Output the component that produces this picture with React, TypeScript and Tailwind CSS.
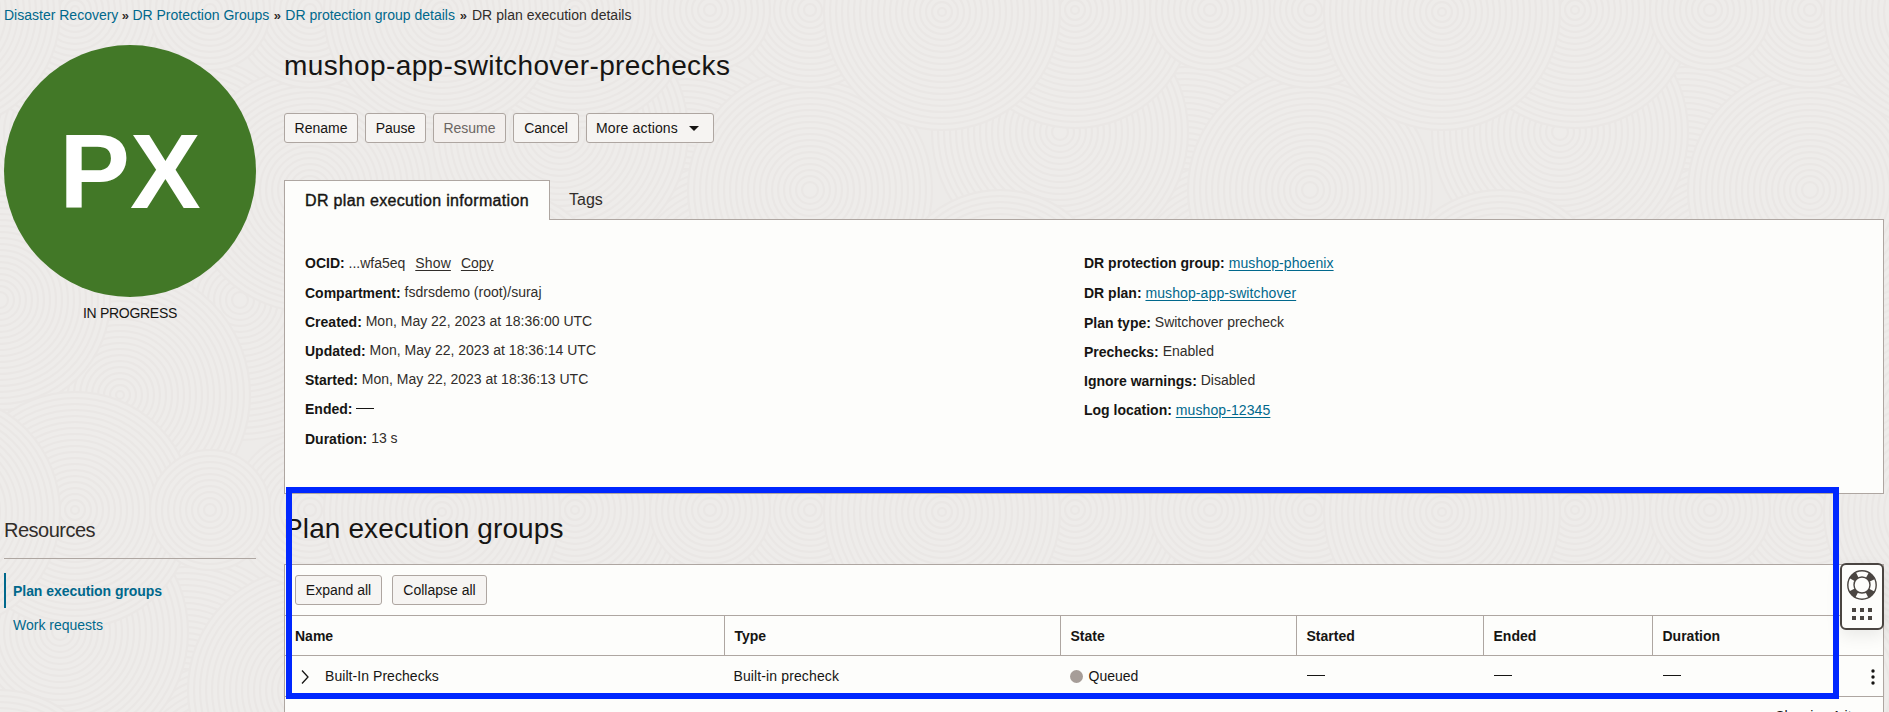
import type { ReactNode } from 'react';

const discs = [
  { x: 455, y: 185, r: 130 },
  { x: 10, y: 300, r: 140 },
  { x: 200, y: 420, r: 135 },
  { x: 390, y: 395, r: 130 },
  { x: 80, y: 190, r: 122 },
  { x: 330, y: 132, r: 128 },
  { x: 270, y: 300, r: 110 },
  { x: 80, y: 10, r: 78 },
  { x: 345, y: 10, r: 118 },
  { x: 212, y: 12, r: 118 },
  { x: 480, y: 10, r: 60 },
];

function Disc({ x, y, r }: { x: number; y: number; r: number }) {
  const rings: number[] = [];
  for (let k = r; k > 2; k -= 6) rings.push(k);
  return (
    <g fill="#eeecea" stroke="#eae7e5" strokeWidth="2">
      {rings.map((k) => (
        <circle key={k} cx={x} cy={y} r={k} />
      ))}
    </g>
  );
}

function Backdrop() {
  return (
    <svg className="absolute inset-0 -z-10 h-full w-full" aria-hidden="true">
      <defs>
        <pattern id="ripples" x="-103" y="8" width="500" height="500" patternUnits="userSpaceOnUse">
          <rect width="500" height="500" fill="#edebe9" />
          {discs.map((d, i) => (
            <g key={i}>
              {[-500, 0, 500].map((dx) =>
                [-500, 0, 500].map((dy) => <Disc key={`${dx}/${dy}`} x={d.x + dx + 333} y={d.y + dy - 8} r={d.r} />),
              )}
            </g>
          ))}
        </pattern>
      </defs>
      <rect width="100%" height="100%" fill="url(#ripples)" />
    </svg>
  );
}

function Button({ children, width, disabled }: { children: ReactNode; width: string; disabled?: boolean }) {
  return (
    <button
      disabled={disabled}
      className={`flex h-[30px] items-center justify-center rounded-[3px] border border-[#aea6a1] whitespace-nowrap ${width} ${
        disabled ? 'bg-[#f3efed] text-[#6b6663]' : 'bg-[#f6f4f2] text-[#161513]'
      }`}
    >
      {children}
    </button>
  );
}

function Field({ label, tall, children }: { label: string; tall?: boolean; children: ReactNode }) {
  return (
    <div className={`leading-5 whitespace-nowrap ${tall ? 'h-[30px]' : 'h-[29px]'}`}>
      <span className="font-bold text-[#161513]">{label}:</span> {children}
    </div>
  );
}

function Value({ children }: { children: ReactNode }) {
  return <span className="align-[1px] leading-none">{children}</span>;
}

function Link({ children }: { children: ReactNode }) {
  return (
    <a href="#" className="tracking-[0.1px] text-[#00688c] underline underline-offset-2">
      {children}
    </a>
  );
}

function Dash() {
  return <span className="inline-block h-px w-[18px] bg-[#161513] align-[5px]" />;
}

const columns = 'grid grid-cols-[438.5px_336px_236px_187px_169px_1fr]';

export default function App() {
  return (
    <div className="relative isolate h-[712px] w-full overflow-hidden bg-[#edebe9] pt-[5px] pl-1 font-['Liberation_Sans',Arial,sans-serif] text-sm leading-5 text-[#312d2a]">
      <Backdrop />
      <nav className="flex h-5 whitespace-pre">
        <a href="#" className="text-[#00688c]">Disaster Recovery</a>
        <b className="w-3.5 pt-px text-center text-[13px]">»</b>
        <a href="#" className="text-[#00688c]">DR Protection Groups</a>
        <b className="w-4 pt-px text-center text-[13px]">»</b>
        <a href="#" className="text-[#00688c]">DR protection group details</a>
        <b className="w-[17px] pt-px text-center text-[13px]">»</b>
        <span className="tracking-[0.03px]">DR plan execution details</span>
      </nav>

      <div className="flex gap-7">
        <aside className="w-[252px] shrink-0 pt-5">
          <div className="flex size-[252px] items-center justify-center rounded-full bg-[#427827] text-[106px] leading-none font-bold text-white">
            <span>PX</span>
          </div>
          <p className="mt-1.5 text-center tracking-[-0.3px] text-[#161513]">IN PROGRESS</p>
          <h2 className="mt-[195px] h-10 text-xl leading-6 tracking-[-0.5px] text-[#312d2a]">Resources</h2>
          <ul className="border-t border-[#aea6a1] pt-3.5">
            <li className="flex h-[35px] items-center border-l-2 border-[#00688c] pl-[7px] font-bold tracking-[-0.05px] text-[#00688c]">
              Plan execution groups
            </li>
            <li className="flex h-[33px] items-center pl-[9px] text-[#00688c]">Work requests</li>
          </ul>
        </aside>

        <main className="w-[1600px] shrink-0 pt-[25px]">
          <h1 className="text-[28px] leading-8 tracking-[0.39px] text-[#161513]">mushop-app-switchover-prechecks</h1>
          <div className="mt-[31px] flex gap-[7px]">
            <Button width="w-[74px]">Rename</Button>
            <Button width="w-[61px]">Pause</Button>
            <Button width="w-[73px]" disabled>Resume</Button>
            <Button width="w-[66px]">Cancel</Button>
            <Button width="w-[128px]">
              <span className="tracking-[0.15px]">More actions</span>
              <svg className="mr-[5px] ml-[11px] h-[5px] w-[10px]" viewBox="0 0 10 5">
                <path d="M0 0h10L5 5z" fill="#161513" />
              </svg>
            </Button>
          </div>

          <div className="mt-[37px] flex h-10 items-center text-base">
            <div className="z-10 flex h-10 w-[266px] items-center justify-center border border-b-0 border-[#aea6a1] bg-[#fdfdfb] tracking-[0.33px] text-[#161513] [-webkit-text-stroke:0.4px_#161513]">
              DR plan execution information
            </div>
            <div className="pl-[19px]">Tags</div>
          </div>
          <section className="-mt-px flex h-[275px] border border-[#aea6a1] bg-[#fdfdfb] px-5 pt-[33px]">
            <div className="w-[779px]">
              <Field label="OCID" tall>
                ...wfa5eq <a href="#" className="ml-1.5 tracking-[0.15px] underline underline-offset-2">Show</a>
                <a href="#" className="ml-2.5 underline underline-offset-2">Copy</a>
              </Field>
              <Field label="Compartment"><Value>fsdrsdemo (root)/suraj</Value></Field>
              <Field label="Created"><Value>Mon, May 22, 2023 at 18:36:00 UTC</Value></Field>
              <Field label="Updated"><Value>Mon, May 22, 2023 at 18:36:14 UTC</Value></Field>
              <Field label="Started"><Value>Mon, May 22, 2023 at 18:36:13 UTC</Value></Field>
              <Field label="Ended" tall><Dash /></Field>
              <Field label="Duration"><Value>13 s</Value></Field>
            </div>
            <div>
              <Field label="DR protection group" tall><Link>mushop-phoenix</Link></Field>
              <Field label="DR plan" tall><Link>mushop-app-switchover</Link></Field>
              <Field label="Plan type"><Value>Switchover precheck</Value></Field>
              <Field label="Prechecks"><Value>Enabled</Value></Field>
              <Field label="Ignore warnings"><Value>Disabled</Value></Field>
              <Field label="Log location"><Link>mushop-12345</Link></Field>
            </div>
          </section>

          <h2 className="mt-[19px] text-[28px] leading-8 tracking-[0.12px] text-[#161513]">Plan execution groups</h2>
          <section className="mt-[19px] h-[200px] border border-[#aea6a1] bg-[#fdfdfb] text-[#161513]">
            <div className="flex h-[51px] gap-2.5 border-b border-[#aea6a1] pt-2.5 pl-2.5">
              <Button width="w-[87px]">Expand all</Button>
              <Button width="w-[95px]">Collapse all</Button>
            </div>
            <div className={`${columns} h-10 border-b border-[#aea6a1] leading-[39px] font-bold`}>
              <div className="pt-px pl-2.5">Name</div>
              <div className="border-l border-[#aea6a1] pt-px pl-2.5">Type</div>
              <div className="border-l border-[#aea6a1] pt-px pl-2.5">State</div>
              <div className="border-l border-[#aea6a1] pt-px pl-2.5">Started</div>
              <div className="border-l border-[#aea6a1] pt-px pl-2.5">Ended</div>
              <div className="border-l border-[#aea6a1] pt-px pl-2.5">Duration</div>
            </div>
            <div className={`${columns} h-[41px] border-b border-[#aea6a1] leading-10`}>
              <div className="flex items-center pl-4">
                <svg className="mt-0.5 mr-4 h-3.5 w-2" viewBox="0 0 8 14" fill="none" stroke="#161513" strokeWidth="1.300">
                  <path d="M1 .5 7 7 1 13.500" />
                </svg>
                <span className="tracking-[0.06px]">Built-In Prechecks</span>
              </div>
              <div className="pl-2.5 tracking-[0.12px]">Built-in precheck</div>
              <div className="flex items-center pl-2.5">
                <span className="mr-1.5 size-[13px] rounded-full bg-[#a69d98]" />
                Queued
              </div>
              <div className="pl-[11px]"><Dash /></div>
              <div className="pl-[11px]"><Dash /></div>
              <div className="flex justify-between pr-2 pl-[11px]">
                <div><Dash /></div>
                <svg className="mt-[13px] h-4 w-1" viewBox="0 0 4 16" fill="#161513">
                  <circle cx="2" cy="2" r="1.700" />
                  <circle cx="2" cy="8" r="1.700" />
                  <circle cx="2" cy="14" r="1.700" />
                </svg>
              </div>
            </div>
            <p className="mt-[9px] pr-3 text-right">Showing 1 item</p>
          </section>
        </main>
      </div>

      <div className="absolute top-[563px] left-[1840px] flex h-[67px] w-11 flex-col items-center rounded-md border-2 border-[#4a4541] bg-[#fdfdfb] shadow-[0_6px_16px_rgba(0,0,0,0.08)]">
        <svg className="mt-[5px] size-[30px] shrink-0" viewBox="0 0 30 30" fill="none" stroke="#4a4541">
          <circle cx="15" cy="15" r="11.250" strokeWidth="6.500" strokeDasharray="7 10.671" strokeDashoffset="-5.335" />
          <circle cx="15" cy="15" r="14.200" strokeWidth="1.400" />
          <circle cx="15" cy="15" r="8" strokeWidth="1.400" />
        </svg>
        <div className="mt-2 grid grid-cols-3 gap-x-1 gap-y-1">
          {[0, 1, 2, 3, 4, 5].map((n) => (
            <span key={n} className="size-1 bg-[#4a4541]" />
          ))}
        </div>
      </div>

      <div className="pointer-events-none absolute top-[487px] left-[286px] h-[212px] w-[1553px] border-[6px] border-[#0027ff]" />
    </div>
  );
}
